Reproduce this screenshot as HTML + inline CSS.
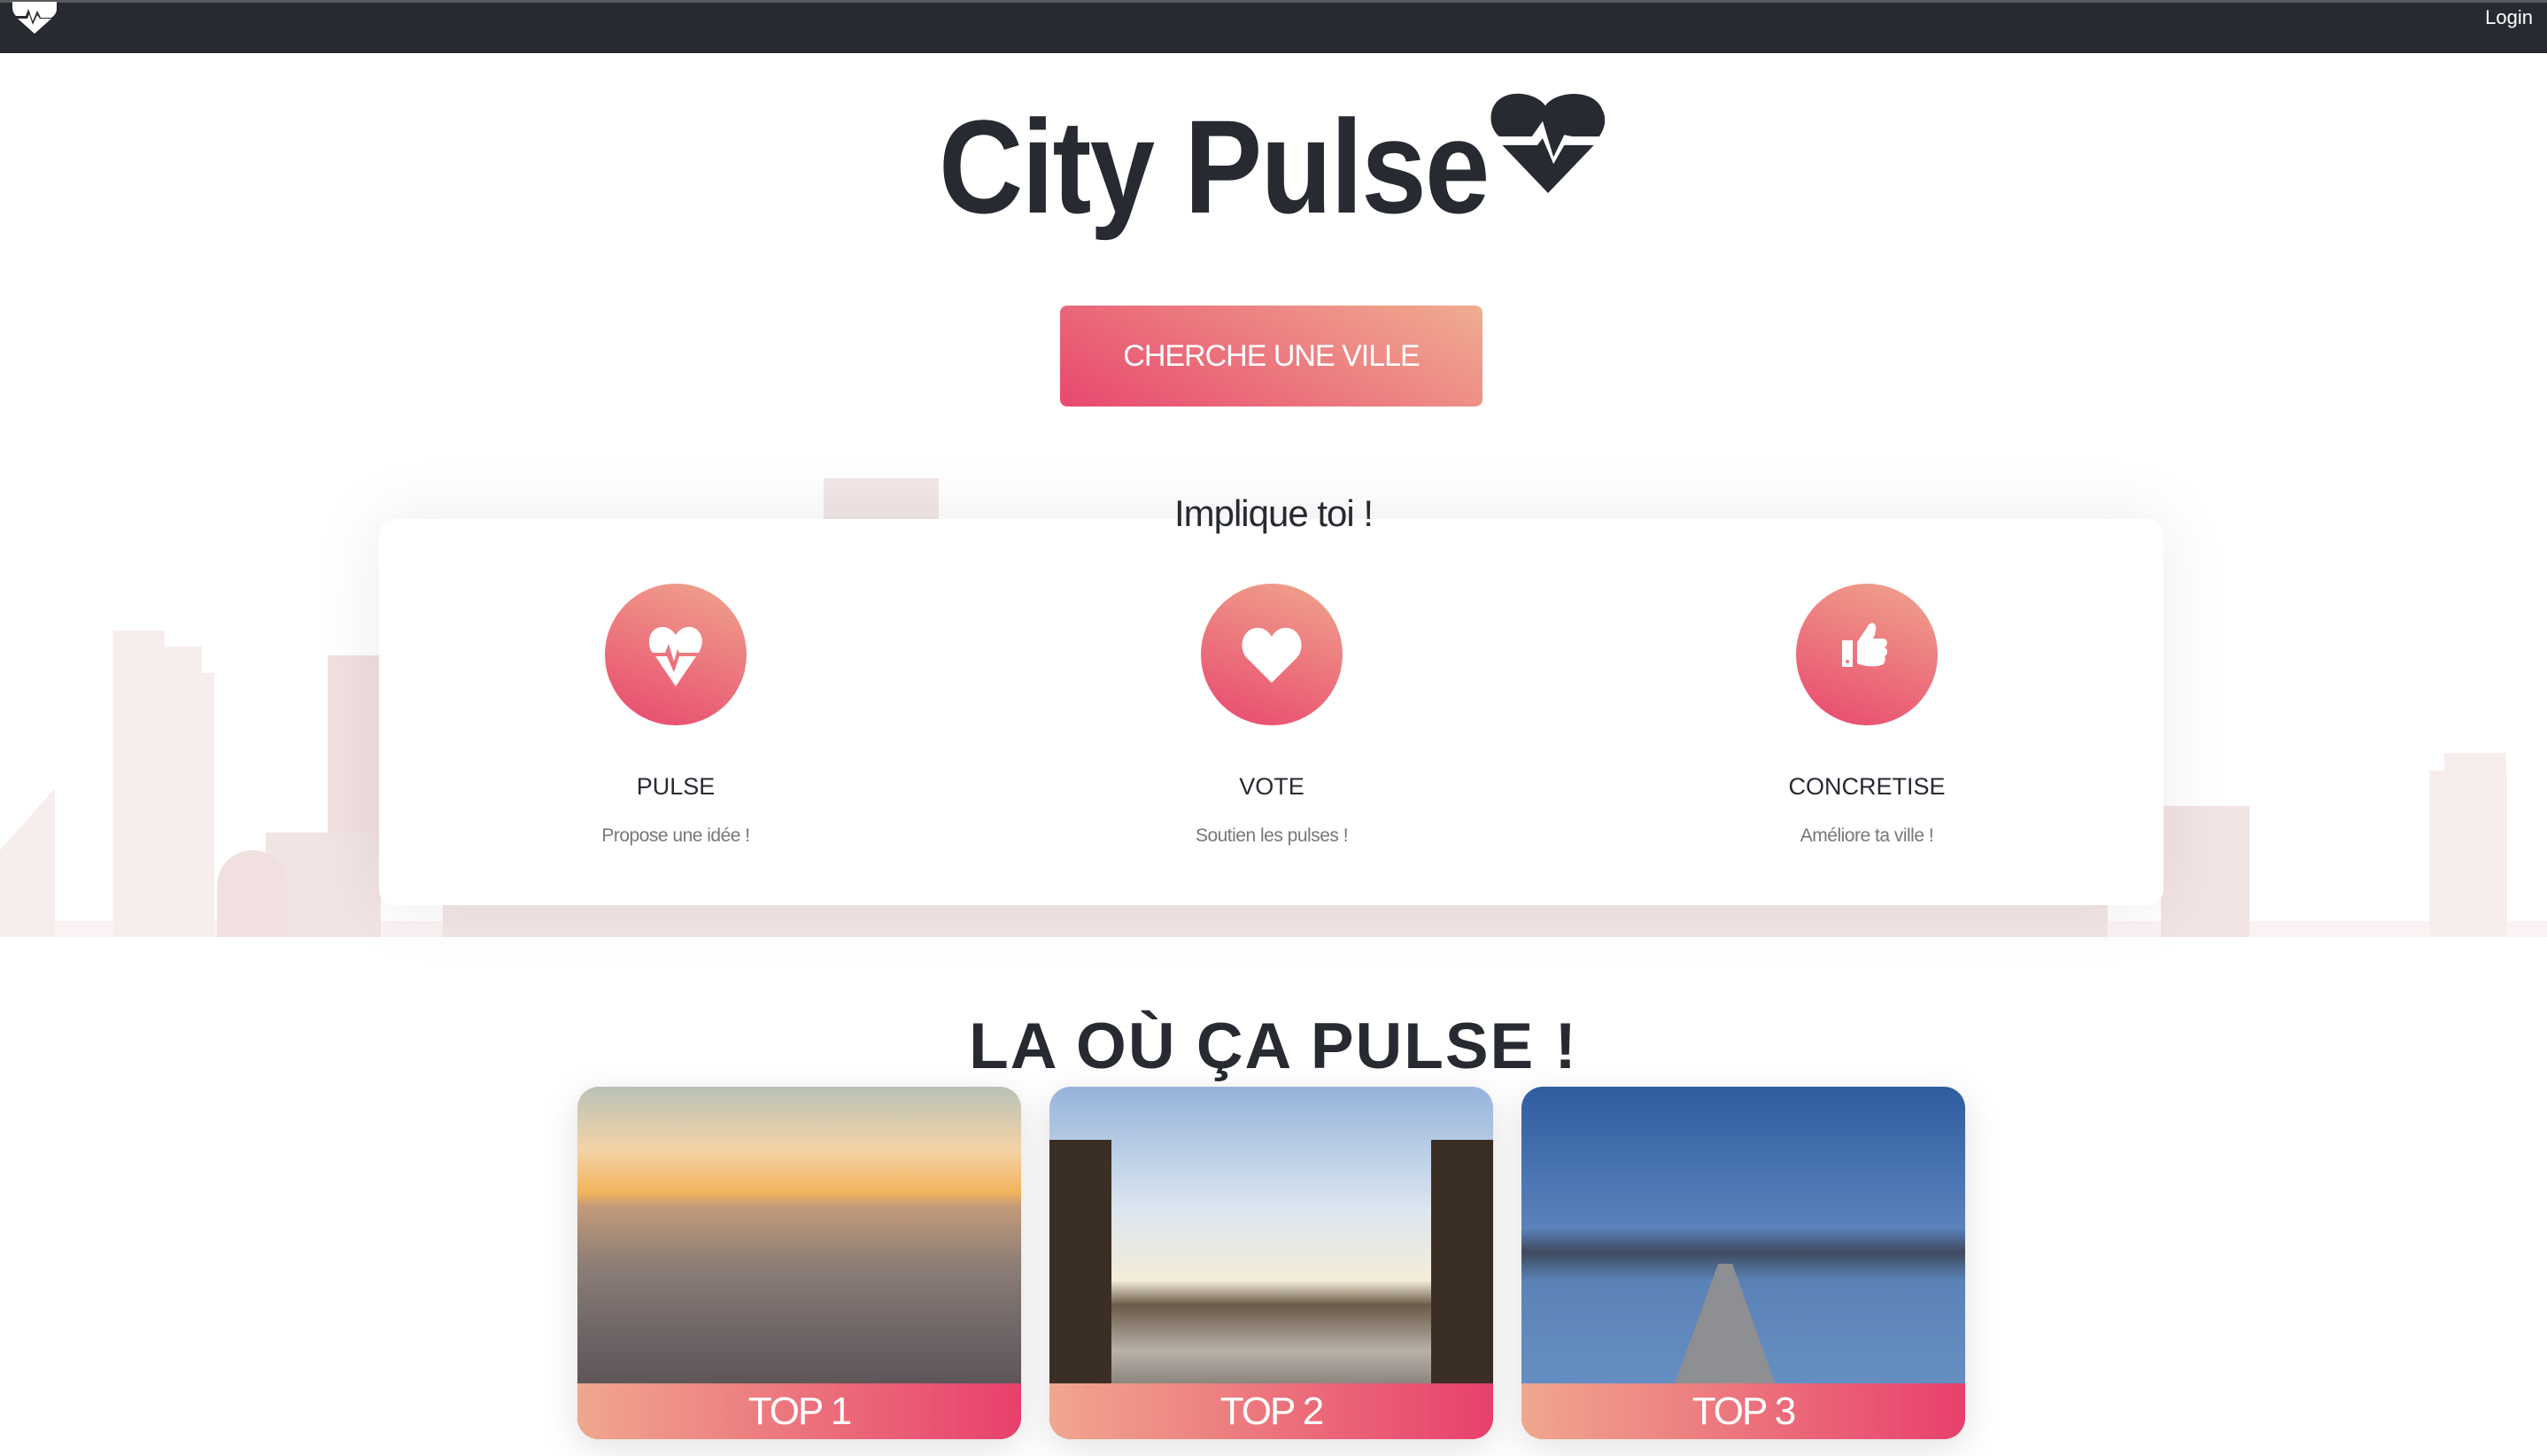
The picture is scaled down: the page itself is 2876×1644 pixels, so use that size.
<!DOCTYPE html>
<html><head><meta charset="utf-8"><style>
*{margin:0;padding:0;box-sizing:border-box}
body{width:2876px;height:1644px;background:#fff;font-family:"Liberation Sans",sans-serif;position:relative;overflow:hidden;color:#272a31}
.top{position:absolute;left:0;top:0;width:2876px;height:60px;background:#272a31;border-top:3px solid #5a5a5e}
.login{position:absolute;right:16px;top:4px;color:#fff;font-size:22px}
.abs{position:absolute}
.logo{position:absolute;left:1060px;top:113px;font-size:150px;font-weight:bold;letter-spacing:-2px;line-height:1;transform:scaleX(0.88);transform-origin:0 0;white-space:nowrap}
.btn{position:absolute;left:1197px;top:345px;width:477px;height:114px;border-radius:8px;background:linear-gradient(30deg,#e8486e,#f0ad91);color:#fff;font-size:34px;text-align:center;line-height:114px;letter-spacing:-1px}
.card{position:absolute;left:428px;top:586px;width:2015px;height:436px;background:#fff;border-radius:18px;box-shadow:0 0 80px rgba(0,0,0,.08)}
.impl{position:absolute;left:0;width:2876px;top:556px;text-align:center;font-size:42px;color:#272a31;letter-spacing:-1px}
.circ{position:absolute;width:160px;height:160px;border-radius:50%;background:linear-gradient(20deg,#e8486e,#f0a58d)}
.lab{position:absolute;width:400px;text-align:center;font-size:27px;color:#272a31}
.sub{position:absolute;width:400px;text-align:center;font-size:21px;color:#777;letter-spacing:-.5px}
.h2{position:absolute;left:0;width:2876px;top:1140px;text-align:center;font-size:73px;font-weight:bold;letter-spacing:2px}
.ph{position:absolute;top:1227px;width:501px;height:398px;border-radius:24px;overflow:hidden;box-shadow:0 10px 40px rgba(0,0,0,.12)}
.bar{position:absolute;left:0;bottom:0;width:100%;height:63px;background:linear-gradient(90deg,#f0a78e,#e8406c);color:#fff;font-size:44px;text-align:center;line-height:63px;letter-spacing:-2px}
.sk{position:absolute;background:#f8eded}
</style></head><body>
<div class="top">
<svg class="abs" style="left:12px;top:-3px" width="54" height="40" viewBox="0 0 54 40"><path d="M2 2 H52 V10 Q52 16 46 20 H34 L30 12 L25 24 L20 10 L17 18 H6 Q2 14 2 8Z" fill="#fff"/><path d="M8 21 H19 L21 16 L25 28 L30 17 L33 21 H46 L27 38Z" fill="#fff"/></svg>
<div class="login">Login</div>
</div>
<div class="logo">City Pulse</div>
<svg class="abs" style="left:1678px;top:100px" width="134" height="118" viewBox="0 0 88 122" preserveAspectRatio="none"><path d="M44 20 C36 2 8 -2 4 28 C2 44 8 54 10 56 H34 L42 38 L50 80 L58 54 L64 56 H84 C88 46 90 36 86 24 C80 0 52 2 44 20Z" fill="#272a31"/><path d="M12 66 H38 L42 58 L50 88 L58 66 H80 L46 122 Z" fill="#272a31"/></svg>
<div class="btn">CHERCHE UNE VILLE</div>
<div class="sk" style="left:0;top:1040px;width:2876px;height:18px;background:#fbf3f3"></div>
<div class="sk" style="left:128px;top:712px;width:58px;height:346px"></div>
<div class="sk" style="left:186px;top:730px;width:42px;height:328px"></div>
<div class="sk" style="left:228px;top:760px;width:14px;height:298px"></div>
<svg class="abs" style="left:0;top:890px" width="62" height="168"><path d="M0 70 L62 0 V168 H0Z" fill="#f8eded"/></svg>
<div class="sk" style="left:370px;top:740px;width:58px;height:318px;background:#f0e0e0"></div>
<div class="sk" style="left:300px;top:940px;width:130px;height:118px;background:#f3e4e4"></div>
<div class="sk" style="left:245px;top:960px;width:80px;height:98px;background:#f1e0e0;border-radius:40px 40px 0 0"></div>
<div class="sk" style="left:930px;top:540px;width:130px;height:46px;background:#f3e6e6"></div>
<div class="sk" style="left:2440px;top:910px;width:100px;height:148px;background:#f3e4e4"></div>
<div class="sk" style="left:2743px;top:870px;width:88px;height:188px"></div>
<div class="sk" style="left:2760px;top:850px;width:70px;height:30px"></div>
<div class="sk" style="left:500px;top:1022px;width:1880px;height:36px;background:#f3e6e6"></div>
<div class="card"></div>
<div class="impl">Implique toi !</div>
<div class="circ" style="left:683px;top:659px"><svg width="160" height="160" viewBox="0 0 160 160"><path d="M80 58 C72 44 50 46 50 66 C50 72 52 76 54 78 H68 L72 68 L78 88 L82 74 L84 78 H106 C108 74 110 70 110 64 C108 46 88 44 80 58Z" fill="#fff"/><path d="M57 82 H70 L78 100 L84 82 H103 L80 116Z" fill="#fff"/></svg></div>
<div class="circ" style="left:1356px;top:659px"><svg width="160" height="160" viewBox="0 0 160 160"><path d="M80 112 L52 84 C42 74 46 52 62 50 C72 49 78 56 80 60 C82 56 88 49 98 50 C114 52 118 74 108 84Z" fill="#fff"/></svg></div>
<div class="circ" style="left:2028px;top:659px"><svg width="160" height="160" viewBox="0 0 160 160"><rect x="52" y="64" width="12" height="30" fill="#fff"/><circle cx="58" cy="88" r="2" fill="#ee6f7c"/><path d="M69 66 L80 50 C82 44 88 42 90 48 C91 54 88 60 87 62 H98 C104 62 104 70 100 72 C104 74 104 80 100 82 C102 85 100 92 96 92 C90 94 78 94 69 90Z" fill="#fff"/></svg></div>
<div class="lab" style="left:563px;top:873px">PULSE</div>
<div class="lab" style="left:1236px;top:873px">VOTE</div>
<div class="lab" style="left:1908px;top:873px">CONCRETISE</div>
<div class="sub" style="left:563px;top:932px">Propose une idée !</div>
<div class="sub" style="left:1236px;top:932px">Soutien les pulses !</div>
<div class="sub" style="left:1908px;top:932px">Améliore ta ville !</div>
<div class="h2">LA OÙ ÇA PULSE !</div>
<div class="ph" style="left:652px;background:linear-gradient(180deg,#b9c2b8 0%,#f4d3a6 18%,#f3b45e 30%,#c49a78 34%,#8e7f77 50%,#6e6566 70%,#4d4449 100%)"><div class="bar">TOP 1</div></div>
<div class="ph" style="left:1185px;background:linear-gradient(180deg,#95b3da 0%,#dce6f0 35%,#f4ecd8 55%,#6a5a48 62%,#b9b1a8 75%,#3f3a38 100%)"><div class="abs" style="left:0;top:60px;width:70px;height:300px;background:#3b2e24"></div><div class="abs" style="right:0;top:60px;width:70px;height:300px;background:#3b2e24"></div><div class="bar">TOP 2</div></div>
<div class="ph" style="left:1718px;background:linear-gradient(180deg,#2f5da0 0%,#5a82bd 40%,#3f4a5e 47%,#5b82b6 55%,#6a95c8 100%)"><div class="abs" style="left:150px;top:200px;width:160px;height:200px;background:#8d8f92;clip-path:polygon(45% 0,55% 0,100% 100%,0 100%)"></div><div class="bar">TOP 3</div></div>
</body></html>
